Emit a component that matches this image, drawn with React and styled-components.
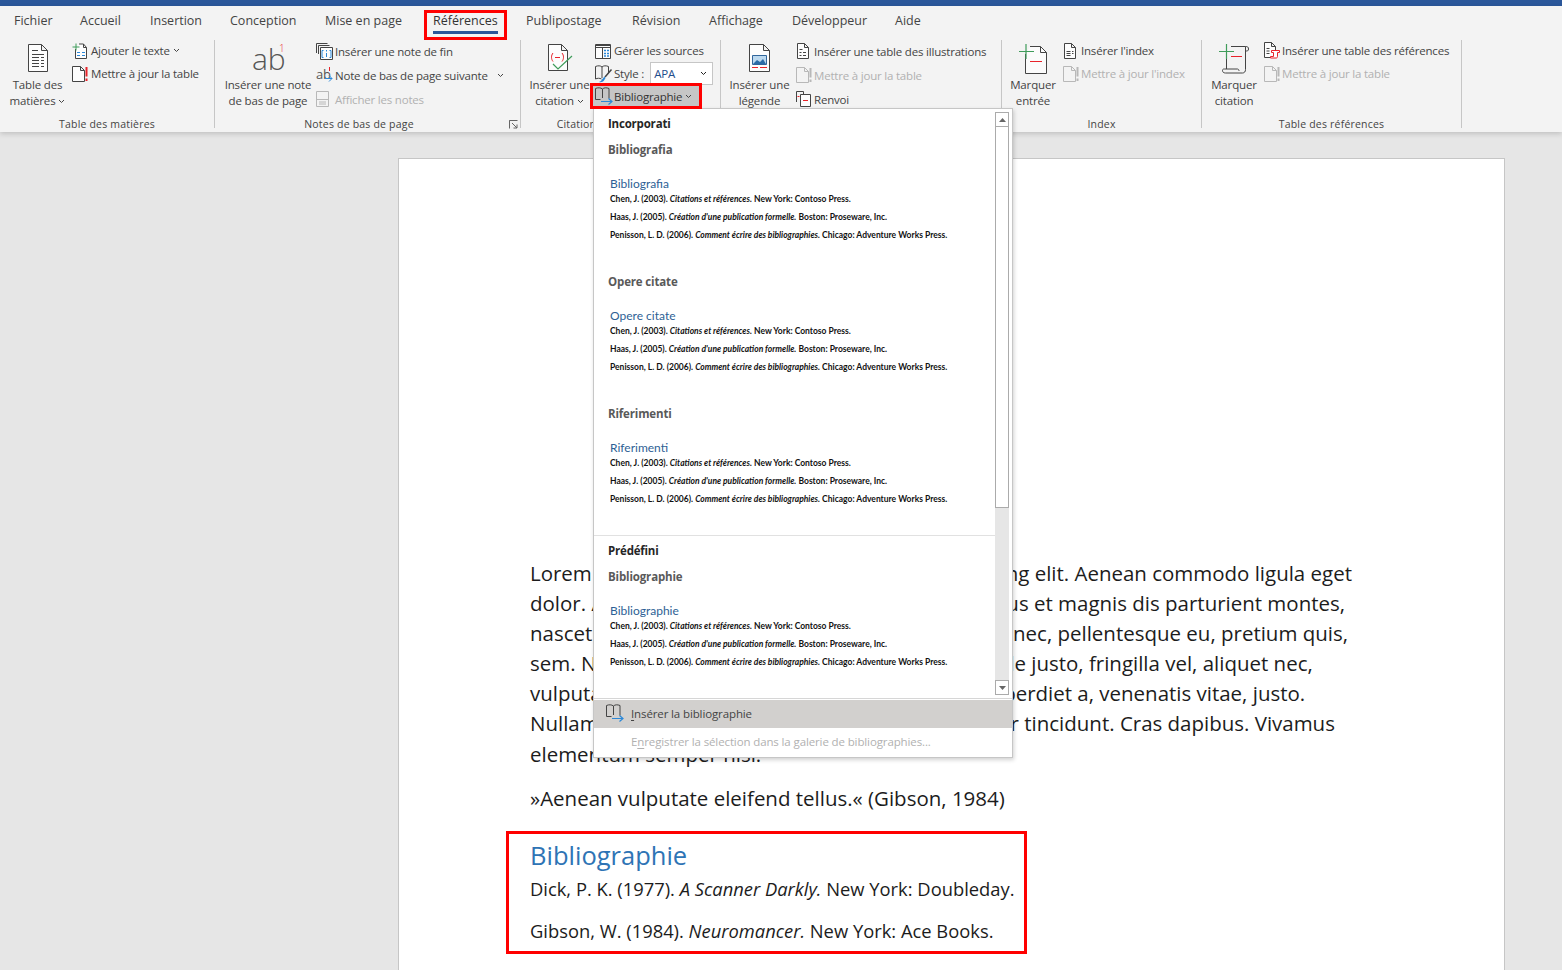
import React from 'react';
import styled, { createGlobalStyle } from 'styled-components';

const GlobalStyle = createGlobalStyle`
  html, body {
    margin: 0;
    height: 100%;
    overflow: hidden;
    background: #e6e6e6;
  }
  *, *:before, *:after { box-sizing: border-box; }
`;

const Shell = styled.div`
  position: relative;
  width: 1562px;
  height: 970px;
  overflow: hidden;
  display: flex;
  flex-direction: column;
  font-family: 'Open Sans', 'Noto Sans', sans-serif;
  color: #444;
`;

const TitleStrip = styled.div`
  height: 6px;
  flex-shrink: 0;
  background: #2b579a;
`;

const Ribbon = styled.header`
  position: relative;
  height: 126px;
  flex-shrink: 0;
  background: #f3f3f3;
  box-shadow: 0 2px 5px rgba(0, 0, 0, 0.16);
`;

const Tabs = styled.nav`
  display: flex;
  height: 30px;
  font-size: 12.5px;
  line-height: 30px;
`;

const Tab = styled.div`
  position: relative;
  width: ${(p) => p.$w}px;
  padding-left: 14px;
  white-space: nowrap;

  ${(p) =>
    p.$active &&
    `
    color: #333;
    &:before {
      content: '';
      position: absolute;
      left: 14px;
      top: 25px;
      width: 65px;
      height: 3px;
      background: #2b579a;
    }
    &:after {
      content: '';
      position: absolute;
      left: 5px;
      top: 4px;
      width: 83px;
      height: 30px;
      border: 3px solid #f00;
    }
  `}
`;

const Groups = styled.div`
  display: flex;
  padding-top: 4px;
`;

const Group = styled.section`
  width: ${(p) => p.$w}px;
  height: 88px;
  border-right: 1px solid #c6c6c6;
  display: flex;
  flex-direction: column;
`;

const GroupBody = styled.div`
  height: 76px;
  display: flex;
  padding-left: ${(p) => p.$pad || 0}px;
`;

const GroupLabel = styled.div`
  position: relative;
  height: 12px;
  line-height: 16px;
  font-size: 10.5px;
  letter-spacing: 0.2px;
  text-align: center;
  color: #444;
  white-space: nowrap;
  padding-right: ${(p) => p.$trim || 0}px;
`;

const Launcher = styled.span`
  position: absolute;
  right: 2px;
  top: 4px;
  display: flex;
`;

const LargeButton = styled.div`
  width: ${(p) => p.$w}px;
  flex-shrink: 0;
  display: flex;
  flex-direction: column;
  align-items: center;
  font-size: 11.5px;
  letter-spacing: -0.15px;
  line-height: 16px;
  white-space: nowrap;
  text-align: center;
`;

const LargeIcon = styled.div`
  height: 37px;
  padding-top: 3px;
  display: flex;
  justify-content: center;
`;

const SmallColumn = styled.div`
  margin-top: -1px;
  display: flex;
  flex-direction: column;
  font-size: 11.5px;
  letter-spacing: -0.2px;
`;

const SmallRow = styled.div`
  display: flex;
  align-items: center;
  height: ${(p) => p.$h || 23}px;
  white-space: nowrap;
  color: ${(p) => (p.$off ? '#b1b1b1' : '#444')};
`;

const IconSlot = styled.span`
  width: ${(p) => p.$w || 19}px;
  flex-shrink: 0;
  display: flex;
  align-items: center;
`;

const Caret = styled.span`
  display: inline-flex;
  margin-left: ${(p) => p.$gap || 3}px;
  vertical-align: middle;
`;

const StyleSelect = styled.div`
  width: 63px;
  height: 23px;
  margin-left: 6px;
  padding: 0 5px 0 3px;
  display: flex;
  align-items: center;
  justify-content: space-between;
  background: #fff;
  border: 1px solid #c6c6c6;
  color: #1f4e8c;
`;

const BibButton = styled.div`
  position: relative;
  z-index: 3;
  width: 106px;
  height: 20px;
  margin: 1px 0 0 -2px;
  padding-left: 2px;
  display: flex;
  align-items: center;
  white-space: nowrap;
  color: #333;
  background: #c6c6c6;
  box-shadow: 0 0 0 3px #f00;
`;

/* workspace and document */

const Workspace = styled.main`
  flex: 1;
  min-height: 0;
  padding: 26px 0 0 398px;
  background: #e6e6e6;
`;

const Page = styled.article`
  width: 1107px;
  height: 820px;
  padding: 399px 0 0 107px;
  background: #fff;
  border: 1px solid #c6c6c6;
  font-size: 20.48px;
  line-height: 30.1px;
  color: #1c1c1c;
`;

const Para = styled.div`
  padding-left: 24px;
  margin-bottom: 14px;
`;

const Line = styled.div`
  white-space: nowrap;
`;

const BibBlock = styled.div`
  width: 521px;
  height: 123px;
  margin-top: 18px;
  padding: 3px 0 0 21px;
  border: 3px solid #f00;
`;

const BibHeading = styled.h2`
  margin: 0;
  font-size: 25.5px;
  font-weight: 400;
  line-height: 37px;
  color: #2e74b5;
`;

const BibEntry = styled.p`
  margin: 0 0 12px;
  font-size: 18.35px;
  white-space: nowrap;
`;

/* bibliography drop-down */

const Menu = styled.div`
  position: absolute;
  z-index: 2;
  left: 593px;
  top: 108px;
  width: 420px;
  height: 650px;
  background: #fff;
  border: 1px solid #c6c6c6;
  box-shadow: 1px 2px 4px rgba(0, 0, 0, 0.18);
  display: flex;
  flex-direction: column;
`;

const Gallery = styled.div`
  height: 589px;
  flex-shrink: 0;
  display: flex;
`;

const GalleryList = styled.div`
  flex: 1;
  overflow: hidden;
`;

const GallerySection = styled.div`
  padding-top: 7px;
  ${(p) => p.$divided && 'border-top: 1px solid #e1e1e1;'}
`;

const SectionHead = styled.div`
  padding-left: 14px;
  font-size: 11.5px;
  font-weight: 700;
  line-height: 16px;
  letter-spacing: -0.2px;
  color: #262626;
`;

const Item = styled.div`
  height: 132px;
  padding: 10px 0 0 14px;
  &:last-child {
    height: 139px;
  }
`;

const ItemName = styled.div`
  font-size: 11.5px;
  font-weight: 700;
  line-height: 16px;
  letter-spacing: -0.15px;
  color: #595959;
`;

const PreviewTitle = styled.div`
  margin: 18px 0 -2px 2px;
  font-family: Lato, 'Open Sans', sans-serif;
  font-size: 12px;
  line-height: 16px;
  color: #2e5f95;
`;

const PreviewRef = styled.div`
  margin-left: 2px;
  font-family: Lato, 'Open Sans', sans-serif;
  font-size: 8.5px;
  font-weight: 700;
  line-height: 18px;
  color: #111;
  white-space: nowrap;
  em {
    font-style: italic;
  }
`;

const Scrollbar = styled.div`
  width: 14px;
  margin-right: 3px;
  padding: 3px 0;
  display: flex;
  flex-direction: column;
`;

const ScrollButton = styled.div`
  height: 15px;
  display: flex;
  align-items: center;
  justify-content: center;
  background: #fff;
  border: 1px solid #ababab;
`;

const ScrollThumb = styled.div`
  height: 381px;
  background: #fff;
  border: 1px solid #ababab;
  border-top: 0;
`;

const ScrollTrack = styled.div`
  flex: 1;
  background: #e6e6e6;
`;

const MenuFooter = styled.div`
  flex: 1;
  padding-top: 1px;
  border-top: 1px solid #d6d6d6;
  font-size: 11.5px;
  letter-spacing: -0.12px;
`;

const MenuAction = styled.div`
  height: 28px;
  padding: 0 0 2px ${(p) => (p.$plain ? 37 : 12)}px;
  display: flex;
  align-items: center;
  white-space: nowrap;
  color: ${(p) => (p.$off ? '#b1b1b1' : '#444')};
  background: ${(p) => (p.$hot ? '#d2d0ce' : 'transparent')};
  u {
    text-underline-offset: 2px;
  }
`;

const INK = '#444';
const RED = '#e8232a';
const BLUE = '#2b88d8';
const GREEN = '#3f9c5a';
const OFF = '#b8b8b8';

const Chevron = ({ color = '#444' }) => (
  <svg width="7" height="5" viewBox="0 0 7 5">
    <path d="M1 1l2.5 2.5L6 1" fill="none" stroke={color} strokeWidth="1" />
  </svg>
);

const TocIcon = () => (
  <svg width="24" height="30" viewBox="0 0 24 30" fill="none" stroke={INK}>
    <path d="M2.5 1.5h13l6 6v21h-19zM15.5 1.5v6h6" fill="#fdfdfd" />
    <path d="M6 7.5h6M6 11.5h12M6 14.5h7M15 14.5h3M6 17.5h7M15 17.5h3M6 20.5h7M15 20.5h3M6 23.5h7M15 23.5h3" strokeWidth="1" />
  </svg>
);

const AddTextIcon = () => (
  <svg width="16" height="16" viewBox="0 0 16 16" fill="none">
    <path d="M3.5 6v9.5h11V4.5l-3-3.500H7" stroke={INK} fill="#fdfdfd" />
    <path d="M11.500 1v3.500h3" stroke={INK} />
    <path d="M4 .5v7M.5 4h7" stroke={GREEN} />
    <path d="M5 9.500h3M10 9.500h3M5 12.500h3M10 12.500h3" stroke={BLUE} />
  </svg>
);

const UpdateIcon = ({ off }) => (
  <svg width="17" height="16" viewBox="0 0 17 16" fill="none">
    <path d="M.5.5h8l4 4v11H.5zM8.500.5v4h4" stroke={off ? OFF : INK} fill={off ? '#f3f3f3' : '#fdfdfd'} />
    <path d="M14.500 1v9.500M14.500 12.500v2.500" stroke={off ? OFF : RED} strokeWidth="2" />
  </svg>
);

const AbIcon = () => (
  <svg width="34" height="32" viewBox="0 0 34 32">
    <text x="1" y="27" fontFamily="Open Sans, sans-serif" fontWeight="300" fontSize="30" fill="#555">ab</text>
    <text x="28" y="9" fontFamily="Open Sans, sans-serif" fontWeight="300" fontSize="10" fill={RED}>1</text>
  </svg>
);

const EndnoteIcon = () => (
  <svg width="17" height="17" viewBox="0 0 17 17" fill="none">
    <path d="M.5 10V.500h11M2.500 11V2.500h11" stroke={INK} />
    <path d="M4.500 4.500h12v12h-12z" stroke={INK} fill="#fdfdfd" />
    <path d="M7.500 7.500h-1.500v7h1.500M13.500 7.500h1.500v7h-1.500M10.500 7v1.500M10.500 10v4" stroke={BLUE} />
  </svg>
);

const NextNoteIcon = () => (
  <svg width="18" height="17" viewBox="0 0 18 17" fill="none">
    <text x="0" y="12" fontFamily="Open Sans, sans-serif" fontSize="13" fill="#555">ab</text>
    <path d="M13.500 0v4" stroke={RED} />
    <path d="M9 11.500h7M13 8.500l3 3-3 3" stroke={BLUE} />
  </svg>
);

const ShowNotesIcon = () => (
  <svg width="14" height="16" viewBox="0 0 14 16" fill="none" stroke={OFF}>
    <path d="M.5.500h12v15H.500zM.5 8.500h12" />
    <path d="M3 11h7M3 13h7" />
  </svg>
);

const CitationIcon = () => (
  <svg width="28" height="30" viewBox="0 0 28 30" fill="none">
    <path d="M2.500 1.500h13l6 6v20h-19zM15.500 1.500v6h6" stroke={INK} fill="#fdfdfd" />
    <path d="M7 10c-2 2.500-2 6 0 8.500M16 10c2 2.500 2 6 0 8.500M9 14.500h5" stroke={RED} />
    <path d="M7 21l5 5 14-13" stroke={GREEN} strokeWidth="1.200" />
  </svg>
);

const SourcesIcon = () => (
  <svg width="16" height="16" viewBox="0 0 16 16" fill="none">
    <path d="M.5 1.500h15v14H.500z" stroke={INK} fill="#fdfdfd" />
    <path d="M.5 4.500h15" stroke={INK} />
    <path d="M.5 2.500h15" stroke={INK} />
    <path d="M9 7.500h2M12 7.500h2M9 10.500h2M12 10.500h2M9 13h2M12 13h2" stroke={BLUE} strokeWidth="1.500" />
    <path d="M7.500 5v10" stroke={INK} />
  </svg>
);

const StyleIcon = () => (
  <svg width="18" height="18" viewBox="0 0 18 18" fill="none">
    <path d="M.5 14V1.500c2.500-1 5-1 6.500.5 1.500-1.500 4-1.500 6.500-.5V8M.5 14c2-1 4-1 6 0M7 2v11" stroke={INK} />
    <path d="M16.500 4.500L10 12" stroke={INK} strokeWidth="1.500" />
    <path d="M9.500 11.500l-2.500 3c-.500 1-1.500 2-3 2.500 2 .500 4 0 5-1.500l1.500-2.500z" fill={BLUE} />
  </svg>
);

const BibIcon = () => (
  <svg width="19" height="18" viewBox="0 0 19 18" fill="none">
    <path d="M.5 12.500V1.500c2.500-1 5-1 7 .5 1.500-1.500 4-1.500 6.500-.5v10M.5 12.500h5M7.500 2v9" stroke={INK} />
    <path d="M6 14.500h11M13.500 11.500l3.500 3-3.500 3" stroke={BLUE} strokeWidth="1.200" />
  </svg>
);

const CaptionIcon = () => (
  <svg width="24" height="30" viewBox="0 0 24 30" fill="none">
    <path d="M1.500 1.500h14l6 6v21h-20zM15.500 1.500v6h6" stroke={INK} fill="#fdfdfd" />
    <path d="M4.500 12.500h14v9h-14z" fill="#bcd9ef" stroke="#31669c" />
    <path d="M5 21l4-4 3 2 3-3 3 5z" fill="#2b6ca8" />
    <path d="M4 24.500h6M12 24.500h7" stroke={RED} />
  </svg>
);

const FiguresIcon = () => (
  <svg width="14" height="16" viewBox="0 0 14 16" fill="none" stroke={INK}>
    <path d="M1.500.5h7l4 4v11h-11zM8.500.5v4h4" fill="#fdfdfd" />
    <path d="M3.500 6.500h3M3.500 9.500h2M7 9.500h3M3.500 12.500h2M7 12.500h3" />
  </svg>
);

const CrossRefIcon = () => (
  <svg width="15" height="16" viewBox="0 0 15 16" fill="none">
    <path d="M.5 11V.500h7v3" stroke={INK} />
    <path d="M4.500 3.500h10v12h-10z" stroke={INK} fill="#fdfdfd" />
    <path d="M7 9.500h5" stroke={RED} />
    <path d="M1.500 5.500h2" stroke={RED} />
  </svg>
);

const MarkEntryIcon = () => (
  <svg width="30" height="32" viewBox="0 0 30 32" fill="none">
    <path d="M7.500 11v19.500h21V9.500l-6-6H12" stroke={INK} fill="#fbfbfb" />
    <path d="M22.500 3.500v6h6" stroke={INK} />
    <path d="M8 1v15M1 8.500h15" stroke={GREEN} strokeWidth="1.200" />
    <path d="M12 18.500h12" stroke={RED} />
  </svg>
);

const IndexIcon = () => (
  <svg width="14" height="16" viewBox="0 0 14 16" fill="none" stroke={INK}>
    <path d="M1.500.5h7l4 4v11h-11zM8.500.5v4h4" fill="#fdfdfd" />
    <path d="M3.500 8.500h4M9 8.500h1.500M3.500 10.500h4M9 10.500h1.500M3.500 12.500h4" />
  </svg>
);

const MarkCitationIcon = () => (
  <svg width="32" height="32" viewBox="0 0 32 32" fill="none">
    <path d="M8.500 11v15M13 3.500h14.500v23c0 2-1 3.500-3 3.500h-17c-2 0-3-1-3-2.500s1-1.500 2-1.500h13c1 0 1.500 1 1.500 2M27.500 3.500c2 0 3 .500 3 2.500s-1 2-3 2" stroke={INK} fill="none" />
    <path d="M8.500 1v15M1 8.500h15" stroke={GREEN} strokeWidth="1.200" />
    <path d="M13 13.500h11" stroke={RED} />
  </svg>
);

const AuthoritiesIcon = () => (
  <svg width="17" height="17" viewBox="0 0 17 17" fill="none">
    <path d="M.5.500h7l4 4v11h-11zM7.500.5v4h4" stroke={INK} fill="#fdfdfd" />
    <path d="M2.500 6.500h3M2.500 9h3M2.500 11.500h3" stroke={INK} />
    <path d="M7.500 8.500h8v2h-2v4c0 1-.500 1.500-1.500 1.500H6.500v-1.500h3v-4h-2z" stroke={RED} fill="#fff" />
  </svg>
);

const LauncherIcon = () => (
  <svg width="9" height="9" viewBox="0 0 9 9" fill="none" stroke="#666">
    <path d="M.5 4V.5h8M.5 .5v8M3 3l5 5M8 4.500V8H4.500" />
  </svg>
);

const TABS = [
  ['Fichier', 66],
  ['Accueil', 70],
  ['Insertion', 80],
  ['Conception', 95],
  ['Mise en page', 108],
  ['Références', 93],
  ['Publipostage', 106],
  ['Révision', 77],
  ['Affichage', 83],
  ['Développeur', 103],
  ['Aide', 60],
];

const REFS = (
  <>
    <PreviewRef>
      Chen, J. (2003). <em>Citations et références.</em> New York: Contoso Press.
    </PreviewRef>
    <PreviewRef>
      Haas, J. (2005). <em>Création d'une publication formelle.</em> Boston: Proseware, Inc.
    </PreviewRef>
    <PreviewRef>
      Penisson, L. D. (2006). <em>Comment écrire des bibliographies.</em> Chicago: Adventure Works Press.
    </PreviewRef>
  </>
);

const GalleryItem = ({ name, title }) => (
  <Item>
    <ItemName>{name}</ItemName>
    <PreviewTitle>{title}</PreviewTitle>
    {REFS}
  </Item>
);

const LOREM = [
  'Lorem ipsum dolor sit amet, consectetuer adipiscing elit. Aenean commodo ligula eget',
  'dolor. Aenean massa. Cum sociis natoque penatibus et magnis dis parturient montes,',
  'nascetur ridiculus mus. Donec quam felis, ultricies nec, pellentesque eu, pretium quis,',
  'sem. Nulla consequat massa quis enim. Donec pede justo, fringilla vel, aliquet nec,',
  'vulputate eget, arcu. In enim justo, rhoncus ut, imperdiet a, venenatis vitae, justo.',
  'Nullam dictum felis eu pede mollis pretium. Integer tincidunt. Cras dapibus. Vivamus',
  'elementum semper nisi.',
];

export default function App() {
  return (
    <Shell>
      <GlobalStyle />
      <TitleStrip />
      <Ribbon>
        <Tabs>
          {TABS.map(([label, w]) => (
            <Tab key={label} $w={w} $active={label === 'Références'}>
              {label}
            </Tab>
          ))}
        </Tabs>
        <Groups>
          <Group $w={215}>
            <GroupBody $pad={3}>
              <LargeButton $w={69}>
                <LargeIcon><TocIcon /></LargeIcon>
                <span>Table des</span>
                <span>matières<Caret><Chevron /></Caret></span>
              </LargeButton>
              <SmallColumn>
                <SmallRow>
                  <IconSlot><AddTextIcon /></IconSlot>
                  Ajouter le texte<Caret><Chevron /></Caret>
                </SmallRow>
                <SmallRow>
                  <IconSlot><UpdateIcon /></IconSlot>
                  Mettre à jour la table
                </SmallRow>
              </SmallColumn>
            </GroupBody>
            <GroupLabel>Table des matières</GroupLabel>
          </Group>

          <Group $w={306}>
            <GroupBody $pad={5}>
              <LargeButton $w={96}>
                <LargeIcon><AbIcon /></LargeIcon>
                <span>Insérer une note</span>
                <span>de bas de page</span>
              </LargeButton>
              <SmallColumn>
                <SmallRow $h={24}>
                  <IconSlot><EndnoteIcon /></IconSlot>
                  Insérer une note de fin
                </SmallRow>
                <SmallRow $h={24}>
                  <IconSlot><NextNoteIcon /></IconSlot>
                  Note de bas de page suivante<Caret $gap={9}><Chevron /></Caret>
                </SmallRow>
                <SmallRow $h={24} $off>
                  <IconSlot><ShowNotesIcon /></IconSlot>
                  Afficher les notes
                </SmallRow>
              </SmallColumn>
            </GroupBody>
            <GroupLabel $trim={17}>
              Notes de bas de page
              <Launcher><LauncherIcon /></Launcher>
            </GroupLabel>
          </Group>

          <Group $w={200}>
            <GroupBody $pad={3}>
              <LargeButton $w={71}>
                <LargeIcon><CitationIcon /></LargeIcon>
                <span>Insérer une</span>
                <span>citation<Caret><Chevron /></Caret></span>
              </LargeButton>
              <SmallColumn>
                <SmallRow>
                  <IconSlot><SourcesIcon /></IconSlot>
                  Gérer les sources
                </SmallRow>
                <SmallRow>
                  <IconSlot><StyleIcon /></IconSlot>
                  Style :
                  <StyleSelect>
                    APA
                    <Chevron color="#222" />
                  </StyleSelect>
                </SmallRow>
                <BibButton>
                  <IconSlot><BibIcon /></IconSlot>
                  Bibliographie<Caret><Chevron /></Caret>
                </BibButton>
              </SmallColumn>
            </GroupBody>
            <GroupLabel>Citations et bibliographie</GroupLabel>
          </Group>

          <Group $w={281}>
            <GroupBody $pad={2}>
              <LargeButton $w={73}>
                <LargeIcon><CaptionIcon /></LargeIcon>
                <span>Insérer une</span>
                <span>légende</span>
              </LargeButton>
              <SmallColumn>
                <SmallRow $h={24}>
                  <IconSlot $w={18}><FiguresIcon /></IconSlot>
                  Insérer une table des illustrations
                </SmallRow>
                <SmallRow $h={24} $off>
                  <IconSlot $w={18}><UpdateIcon off /></IconSlot>
                  Mettre à jour la table
                </SmallRow>
                <SmallRow $h={24}>
                  <IconSlot $w={18}><CrossRefIcon /></IconSlot>
                  Renvoi
                </SmallRow>
              </SmallColumn>
            </GroupBody>
            <GroupLabel>Légendes</GroupLabel>
          </Group>

          <Group $w={200}>
            <GroupBody $pad={1}>
              <LargeButton $w={60}>
                <LargeIcon><MarkEntryIcon /></LargeIcon>
                <span>Marquer</span>
                <span>entrée</span>
              </LargeButton>
              <SmallColumn>
                <SmallRow>
                  <IconSlot $w={18}><IndexIcon /></IconSlot>
                  Insérer l'index
                </SmallRow>
                <SmallRow $off>
                  <IconSlot $w={18}><UpdateIcon off /></IconSlot>
                  Mettre à jour l'index
                </SmallRow>
              </SmallColumn>
            </GroupBody>
            <GroupLabel>Index</GroupLabel>
          </Group>

          <Group $w={260}>
            <GroupBody $pad={2}>
              <LargeButton $w={60}>
                <LargeIcon><MarkCitationIcon /></LargeIcon>
                <span>Marquer</span>
                <span>citation</span>
              </LargeButton>
              <SmallColumn>
                <SmallRow>
                  <IconSlot $w={18}><AuthoritiesIcon /></IconSlot>
                  Insérer une table des références
                </SmallRow>
                <SmallRow $off>
                  <IconSlot $w={18}><UpdateIcon off /></IconSlot>
                  Mettre à jour la table
                </SmallRow>
              </SmallColumn>
            </GroupBody>
            <GroupLabel>Table des références</GroupLabel>
          </Group>
        </Groups>
      </Ribbon>

      <Workspace>
        <Page>
          <Para>
            {LOREM.map((line) => (
              <Line key={line}>{line}</Line>
            ))}
          </Para>
          <Para>»Aenean vulputate eleifend tellus.« (Gibson, 1984)</Para>
          <BibBlock>
            <BibHeading>Bibliographie</BibHeading>
            <BibEntry>
              Dick, P. K. (1977). <em>A Scanner Darkly.</em> New York: Doubleday.
            </BibEntry>
            <BibEntry>
              Gibson, W. (1984). <em>Neuromancer.</em> New York: Ace Books.
            </BibEntry>
          </BibBlock>
        </Page>
      </Workspace>

      <Menu>
        <Gallery>
          <GalleryList>
            <GallerySection>
              <SectionHead>Incorporati</SectionHead>
              <GalleryItem name="Bibliografia" title="Bibliografia" />
              <GalleryItem name="Opere citate" title="Opere citate" />
              <GalleryItem name="Riferimenti" title="Riferimenti" />
            </GallerySection>
            <GallerySection $divided>
              <SectionHead>Prédéfini</SectionHead>
              <GalleryItem name="Bibliographie" title="Bibliographie" />
            </GallerySection>
          </GalleryList>
          <Scrollbar>
            <ScrollButton>
              <svg width="7" height="4" viewBox="0 0 7 4"><path d="M3.500 0L7 4H0z" fill="#666" /></svg>
            </ScrollButton>
            <ScrollThumb />
            <ScrollTrack />
            <ScrollButton>
              <svg width="7" height="4" viewBox="0 0 7 4"><path d="M0 0h7L3.500 4z" fill="#666" /></svg>
            </ScrollButton>
          </Scrollbar>
        </Gallery>
        <MenuFooter>
          <MenuAction $hot>
            <IconSlot $w={25}><BibIcon /></IconSlot>
            <span><u>I</u>nsérer la bibliographie</span>
          </MenuAction>
          <MenuAction $off $plain>
            <span>E<u>n</u>registrer la sélection dans la galerie de bibliographies...</span>
          </MenuAction>
        </MenuFooter>
      </Menu>
    </Shell>
  );
}
